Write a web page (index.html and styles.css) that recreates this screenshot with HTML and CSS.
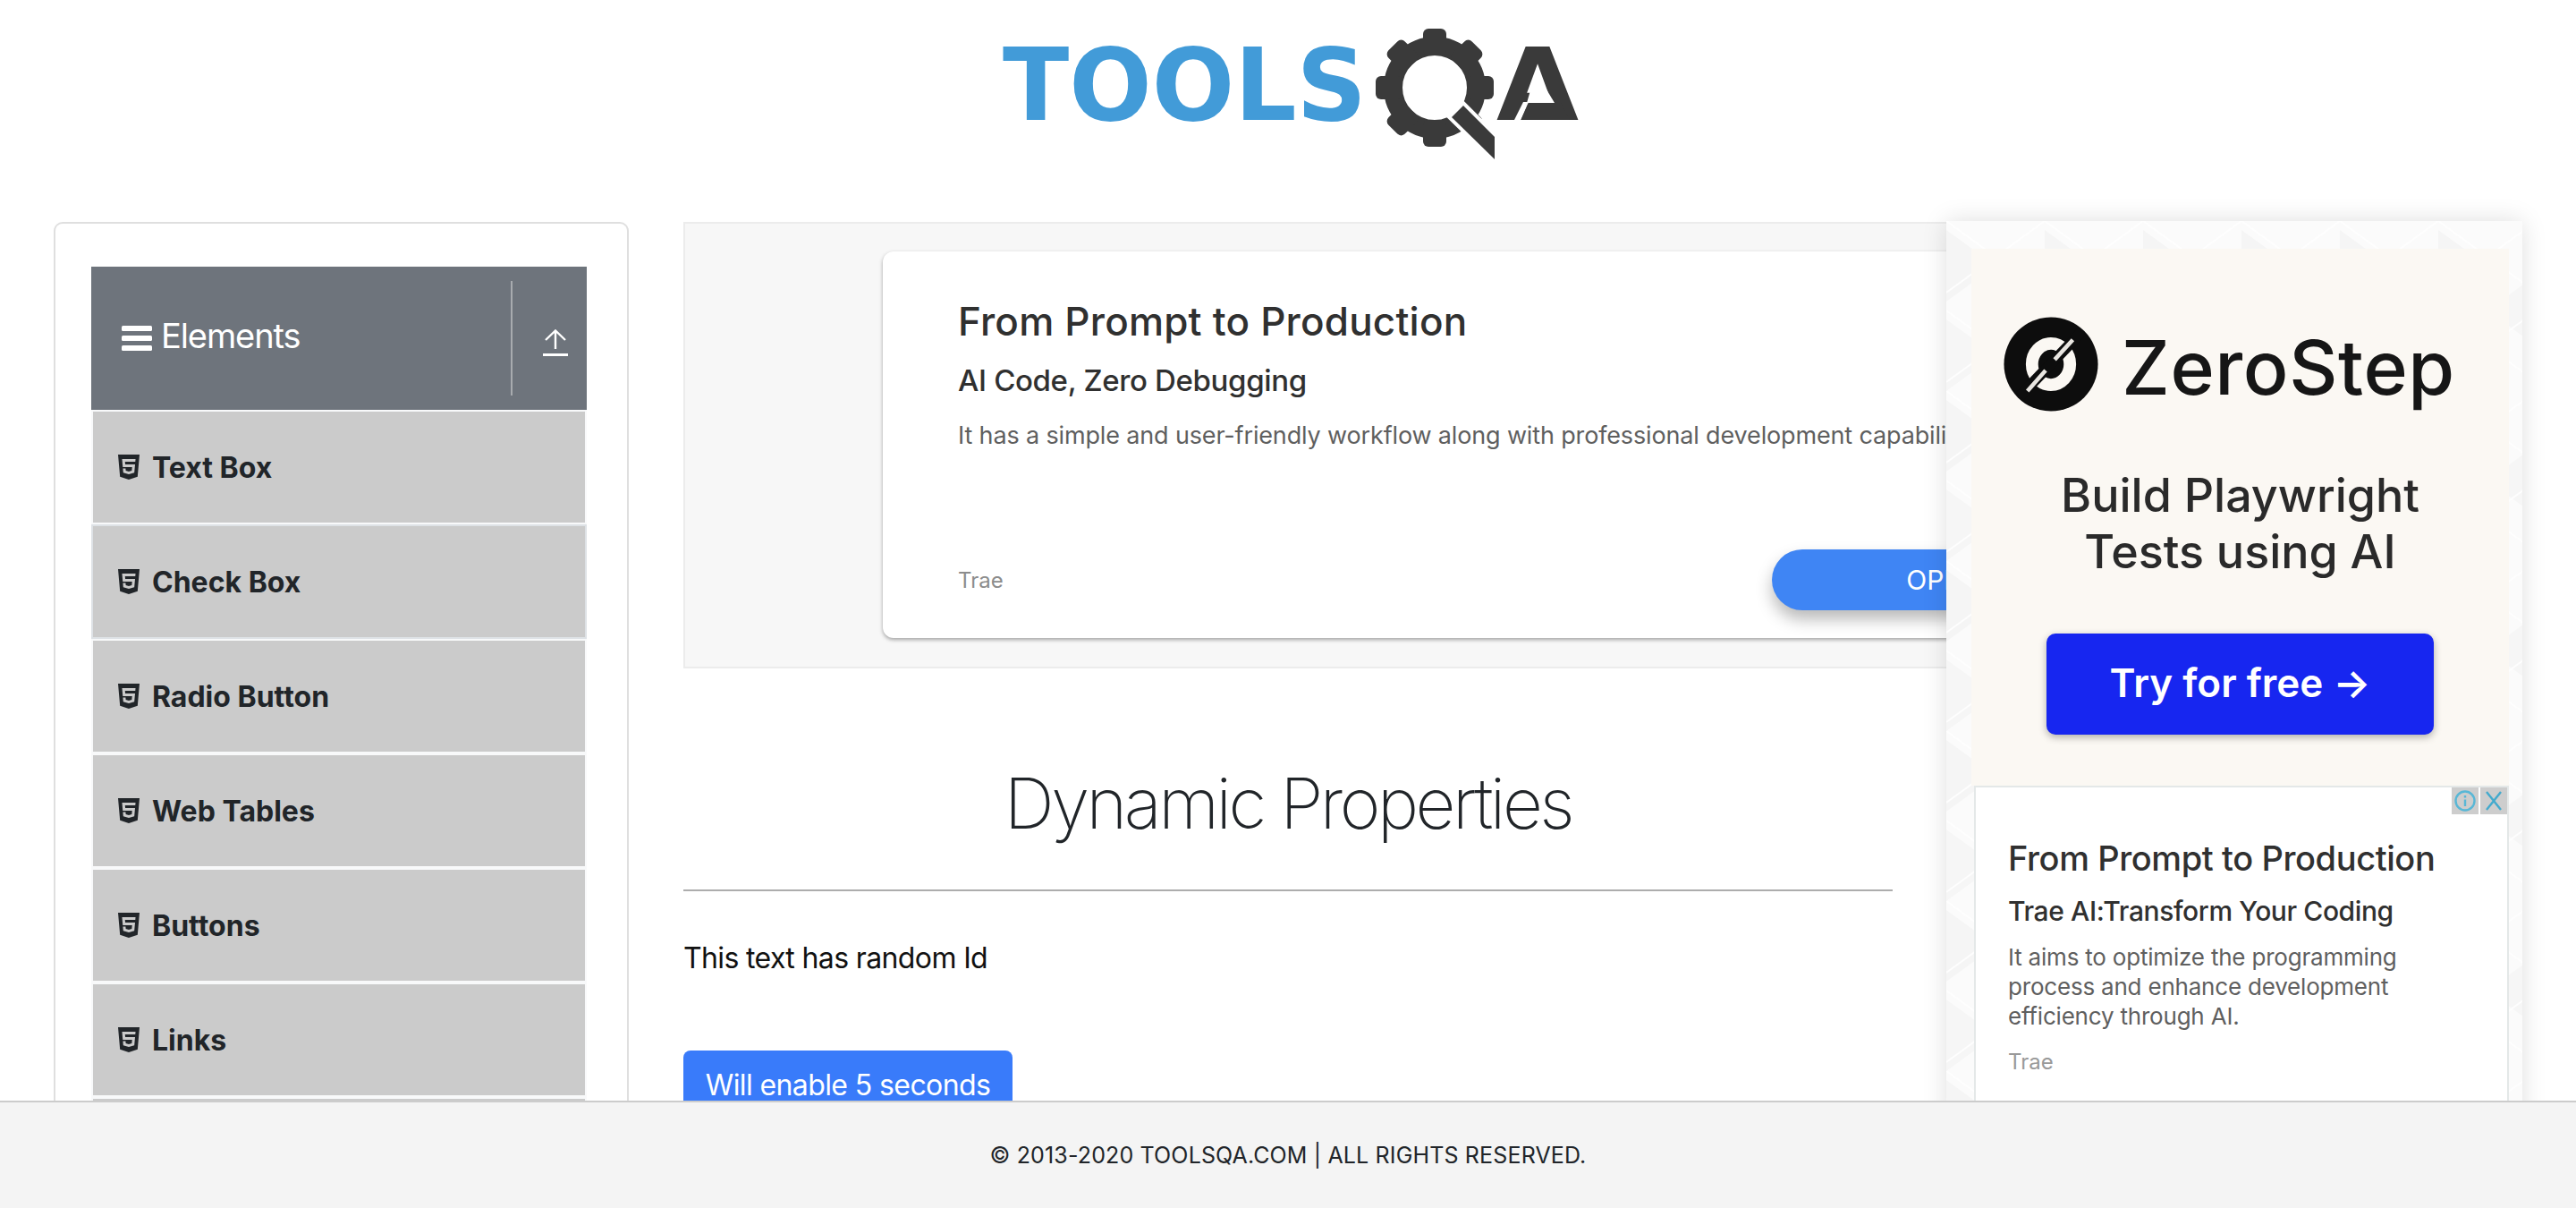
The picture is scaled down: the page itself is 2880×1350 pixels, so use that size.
FILE: index.html
```html
<!DOCTYPE html>
<html lang="en">
<head>
<meta charset="utf-8">
<title>ToolsQA - Dynamic Properties</title>
<link rel="stylesheet" href="styles.css">
</head>
<body>
<svg class="defs" width="0" height="0" aria-hidden="true">
  <symbol id="html5" viewBox="0 0 384 512"><path d="M0 32l34.9 395.8L191.5 480l157.6-52.2L384 32H0zm308.2 127.9H124.4l4.1 49.4h175.6l-13.6 148.4-97.9 27v.3h-1.1l-98.7-27.3-6-75.8h47.7L138 320l53.5 14.5 53.7-14.5 6-62.2H84.3L71.5 112.2h241.1l-4.4 47.7z"/></symbol>
  <rect id="tooth" x="-13" y="-66" width="26" height="30" rx="6"/>
</svg>
<div class="page">
  <div class="scroll">
    <header class="top">
      <svg class="logo" width="660" height="160" viewBox="1110 25 660 160" role="img" aria-label="ToolsQA">
        <text class="logo-tools" x="1121" y="134" textLength="407" lengthAdjust="spacingAndGlyphs">TOOLS</text>
        <g transform="translate(1604 98)" fill="#3a3a3a">
          <circle r="46.5" fill="none" stroke="#3a3a3a" stroke-width="21"/>
          <use href="#tooth"/>
          <use href="#tooth" transform="rotate(45)"/>
          <use href="#tooth" transform="rotate(90)"/>
          <use href="#tooth" transform="rotate(135)"/>
          <use href="#tooth" transform="rotate(180)"/>
          <use href="#tooth" transform="rotate(225)"/>
          <use href="#tooth" transform="rotate(270)"/>
          <use href="#tooth" transform="rotate(315)"/>
        </g>
        <polygon points="1623,131 1636,118 1671,153 1671,178" fill="#3a3a3a" stroke="#fff" stroke-width="8" paint-order="stroke"/>
        <text class="logo-a" x="1673" y="134" textLength="92" lengthAdjust="spacingAndGlyphs">A</text>
        <polygon points="1700,134 1708,115 1745,115 1755,134" fill="#3a3a3a"/>
        <polygon points="1717,80 1738,115 1707,115" fill="#fff"/>
        <polygon points="1693,134 1700,134 1709,114 1703,114" fill="#fff"/>
      </svg>
    </header>
    <div class="content">
      <aside class="side-card">
        <div class="group-head">
          <svg class="burger" width="34" height="28" viewBox="0 0 34 28"><rect y="0" width="34" height="6" rx="1.5"/><rect y="11" width="34" height="6" rx="1.5"/><rect y="22" width="34" height="6" rx="1.5"/></svg>
          <span class="group-title">Elements</span>
          <div class="group-toggle">
            <svg width="28" height="30" viewBox="0 0 28 30" fill="none" stroke="#fff" stroke-width="2.4"><path d="M14 22V1.5M3 12 14 1.5 25 12"/><path d="M0 28.5h28" stroke-width="3"/></svg>
          </div>
        </div>
        <ul class="menu">
          <li class="menu-item"><svg class="h5"><use href="#html5"/></svg><span>Text Box</span></li>
          <li class="menu-item is-hover"><svg class="h5"><use href="#html5"/></svg><span>Check Box</span></li>
          <li class="menu-item"><svg class="h5"><use href="#html5"/></svg><span>Radio Button</span></li>
          <li class="menu-item"><svg class="h5"><use href="#html5"/></svg><span>Web Tables</span></li>
          <li class="menu-item"><svg class="h5"><use href="#html5"/></svg><span>Buttons</span></li>
          <li class="menu-item"><svg class="h5"><use href="#html5"/></svg><span>Links</span></li>
          <li class="menu-item"></li>
        </ul>
      </aside>
      <main class="main">
        <section class="banner">
          <div class="ad-card">
            <h2 class="ad-title">From Prompt to Production</h2>
            <h3 class="ad-sub">AI Code, Zero Debugging</h3>
            <p class="ad-desc">It has a simple and user-friendly workflow along with professional development capabilities.</p>
            <div class="ad-foot">
              <span class="ad-brand">Trae</span>
              <span class="ad-open">OPEN</span>
            </div>
          </div>
        </section>
        <h1 class="title">Dynamic Properties</h1>
        <hr class="rule">
        <p class="random">This text has random Id</p>
        <button class="enable" type="button">Will enable 5 seconds</button>
      </main>
    </div>
    <aside class="side-ad">
      <svg class="ad-pattern" width="644" height="1010" aria-hidden="true">
        <defs>
          <pattern id="tri" width="110" height="190" patternUnits="userSpaceOnUse">
            <polygon points="0,10 55,50 0,90" fill="#f5f5f5"/>
            <polygon points="110,60 55,100 110,140" fill="#f6f6f6"/>
            <polygon points="0,110 55,150 0,190" fill="#f6f6f6"/>
            <path d="M0 0 110 80M110 0 0 80M0 100 110 180M110 100 0 180" stroke="#fefefe" stroke-width="2" fill="none"/>
          </pattern>
        </defs>
        <rect width="644" height="1010" fill="url(#tri)"/>
      </svg>
      <div class="zs-panel">
        <div class="zs-brand">
          <svg class="zs-mark" width="106" height="106" viewBox="0 0 115 115">
            <circle cx="57.5" cy="57.5" r="57" fill="#0d0d0d"/>
            <ellipse cx="57.5" cy="57.5" rx="23" ry="25" fill="none" stroke="#fbf8f3" stroke-width="15"/>
            <path d="M20 96 95 18" stroke="#0d0d0d" stroke-width="13"/>
            <path d="M29 90 51 65M62 52 84 28" stroke="#e9e6e1" stroke-width="5"/>
          </svg>
          <span class="zs-name">ZeroStep</span>
        </div>
        <p class="zs-head">Build Playwright<br>Tests using AI</p>
        <span class="zs-btn">Try for free →</span>
      </div>
      <div class="trae-card">
        <div class="ad-chips">
          <span class="chip"><svg width="24" height="24" viewBox="0 0 24 24" fill="none" stroke="#58b7d6" stroke-width="2.4"><circle cx="12" cy="12" r="10.5"/><path d="M12 10.5V18M12 6v2.4"/></svg></span>
          <span class="chip"><svg width="20" height="24" viewBox="0 0 20 24" fill="none" stroke="#43aacd" stroke-width="2.4"><path d="M2 2 18 22M18 2 2 22"/></svg></span>
        </div>
        <h2 class="trae-title">From Prompt to Production</h2>
        <h3 class="trae-sub">Trae AI:Transform Your Coding</h3>
        <p class="trae-desc">It aims to optimize the programming process and enhance development efficiency through AI.</p>
        <span class="trae-brand">Trae</span>
      </div>
    </aside>
  </div>
  <footer class="foot">© 2013-2020 TOOLSQA.COM | ALL RIGHTS RESERVED.</footer>
</div>
</body>
</html>
```
FILE: styles.css
```css
* { box-sizing: border-box; }
html, body { margin: 0; padding: 0; background: #fff; }
body { font-family: Inter, "Liberation Sans", sans-serif; color: #212529; }
.defs { display: block; height: 0; }

.page { display: grid; grid-template-rows: 1fr 120px; width: 2880px; height: 1350px; overflow: hidden; }
.scroll { position: relative; overflow: hidden; min-height: 0; }
.foot { position: relative; z-index: 3; display: flex; align-items: center; justify-content: center; background: #f4f4f4; border-top: 2px solid #ccc; font-size: 25px; letter-spacing: .15px; color: #212529; }

.top { display: flex; justify-content: center; height: 248px; padding-top: 25px; }
.logo { display: block; }
.logo-tools { font-family: "DejaVu Sans", sans-serif; font-weight: 700; font-size: 112px; fill: #429bd8; }
.logo-a { font-family: "DejaVu Sans", sans-serif; font-weight: 700; font-size: 112px; fill: #3a3a3a; }

.content { display: flex; align-items: flex-start; gap: 61px; padding-left: 60px; }

.side-card { flex: 0 0 643px; height: 1100px; padding: 48px 45px 0 42px; border: 2px solid #dfdfdf; border-bottom: 0; border-radius: 10px 10px 0 0; }
.group-head { display: flex; align-items: center; height: 160px; margin-left: -2px; padding-left: 34px; background: #6e747c; color: #fff; }
.burger { fill: #fff; flex: none; }
.group-title { margin-left: 10px; font-size: 38px; font-weight: 400; line-height: 1; margin-top: -6px; letter-spacing: -1.1px; }
.group-toggle { display: flex; align-items: center; margin-left: auto; width: 85px; height: 128px; padding: 10px 0 0 34px; border-left: 2px solid #a8abaf; }
.menu { list-style: none; margin: 0 0 0 -2px; padding: 0; }
.menu-item { display: flex; align-items: center; height: 128px; padding-left: 28px; background: #cbcbcb; border: 2px solid #f8f9fa; font-size: 32px; font-weight: 700; }
.menu-item.is-hover { border-color: #dee2e6; }
.h5 { flex: none; width: 24px; height: 32px; fill: #212529; margin-right: 14px; }

.main { flex: 0 0 1352px; min-width: 0; }
.banner { width: 1800px; height: 499px; padding: 31px 0 0 221px; background: #f7f7f7; border: 2px solid #ececec; }
.ad-card { display: flex; flex-direction: column; width: 1480px; height: 432px; padding: 50px 0 0 84px; background: #fff; border-radius: 12px; box-shadow: 0 2px 4px rgba(0,0,0,.35); }
.ad-title { margin: 0; font-size: 44px; line-height: 56px; font-weight: 500; color: #303030; letter-spacing: .2px; }
.ad-sub { margin: 16px 0 0; font-size: 33px; line-height: 44px; font-weight: 500; color: #303030; letter-spacing: -.35px; }
.ad-desc { margin: 22px 0 0; font-size: 27px; line-height: 36px; color: #5f5f5f; white-space: nowrap; letter-spacing: -.15px; }
.ad-foot { display: flex; align-items: center; margin-top: 109px; }
.ad-brand { font-size: 24px; color: #8c8c8c; }
.ad-open { display: flex; align-items: center; justify-content: center; width: 384px; height: 68px; margin-left: 859px; background: #3f85f4; color: #fff; font-size: 30px; border-radius: 34px; box-shadow: 0 10px 18px rgba(0,0,0,.28); }

.title { margin: 103px 0 48px; width: 1352px; font-size: 78px; line-height: 96px; font-weight: 200; text-align: center; letter-spacing: -3.5px; }
.rule { width: 1352px; height: 2px; margin: 0; border: 0; background: #adadad; }
.random { margin: 51px 0 79px; font-size: 32px; line-height: 48px; color: #111; letter-spacing: -.63px; }
.enable { display: block; width: 368px; height: 78px; padding: 0; border: 0; border-radius: 8px; background: #397bfa; color: #fff; font: 400 32px/1.5 Inter, "Liberation Sans", sans-serif; letter-spacing: -.6px; }

.side-ad { position: absolute; z-index: 2; left: 2176px; top: 247px; width: 644px; height: 1010px; padding: 31px 15px 0 28px; background: #fbfbfb; box-shadow: 0 0 26px rgba(0,0,0,.13); }
.ad-pattern { position: absolute; left: 0; top: 0; }
.zs-panel { position: relative; display: flex; flex-direction: column; align-items: center; height: 600px; padding-top: 76px; background: #fbf8f3; }
.zs-brand { display: flex; align-items: center; align-self: flex-start; gap: 26px; margin-left: 36px; height: 106px; }
.zs-mark { flex: none; }
.zs-name { margin-top: 8px; font-size: 84px; font-weight: 500; line-height: 1; color: #161616; letter-spacing: .6px; }
.zs-head { margin: 62px 0 60px; font-size: 52px; line-height: 63px; font-weight: 500; color: #2a2a2a; text-align: center; }
.zs-btn { display: flex; align-items: center; justify-content: center; width: 433px; height: 113px; padding-bottom: 3px; background: #1726f0; border-radius: 10px; color: #fff; font-size: 44px; font-weight: 600; box-shadow: 0 3px 8px rgba(0,0,0,.3); }
.trae-card { position: relative; height: 400px; padding: 54px 0 0 36px; background: #fff; border: 2px solid #e4e8e8; margin-left: 3px; }
.ad-chips { position: absolute; right: 0; top: 0; display: flex; gap: 2px; }
.chip { display: flex; align-items: center; justify-content: center; width: 30px; height: 30px; background: #cdcdcd; }
.trae-title { margin: 0; font-size: 38px; line-height: 50px; font-weight: 500; color: #303030; letter-spacing: -.4px; }
.trae-sub { margin: 14px 0 0; font-size: 30px; line-height: 40px; font-weight: 500; color: #303030; letter-spacing: -.4px; }
.trae-desc { width: 470px; margin: 15px 0 0; font-size: 26px; line-height: 33px; color: #5f5f5f; letter-spacing: -.2px; }
.trae-brand { display: block; margin-top: 17px; font-size: 24px; line-height: 36px; color: #999; }
```
